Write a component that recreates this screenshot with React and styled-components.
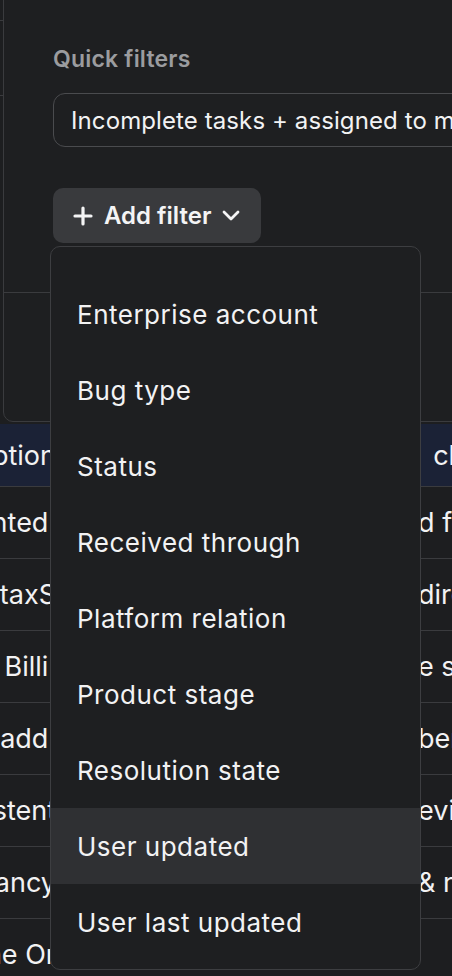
import React from 'react'
import styled, { createGlobalStyle } from 'styled-components'

const Global = createGlobalStyle`
  html, body {
    margin: 0;
    padding: 0;
    background: #1d1e20;
    overflow: hidden;
  }
  * { box-sizing: border-box; }
`;

const Page = styled.div`
  position: relative;
  width: 452px;
  height: 976px;
  overflow: hidden;
  background: #1d1e20;
  font-family: Inter, "Noto Sans", "Liberation Sans", sans-serif;
  color: #f2f2f3;
`;

const Backdrop = styled.div`
  display: flex;
  flex-direction: column;
`;

const Band = styled.div`
  height: ${p => p.h}px;
  border-bottom: ${p => (p.line ? '1px solid #3a3b3e' : 'none')};
`;

const Row = styled.div`
  display: flex;
  align-items: center;
  height: ${p => (p.head ? 63 : 72)}px;
  background: ${p => (p.head ? '#1b2236' : 'transparent')};
  border-bottom: 1px solid #3a3b3e;
  font-size: 27px;
  white-space: nowrap;
`;

const LeadCell = styled.div`
  flex: none;
  width: 56px;
  display: flex;
  justify-content: flex-end;
  overflow: hidden;
`;

const Middle = styled.div`
  flex: none;
  width: 362px;
`;

const TailCell = styled.div`
  flex: none;
  overflow: hidden;
`;

const Panel = styled.div`
  position: absolute;
  left: 3px;
  top: -12px;
  width: 520px;
  height: 434px;
  background: #1e1f21;
  border: 1px solid #3a3b3e;
  border-radius: 10px;
  padding-top: 56px;
  display: flex;
  flex-direction: column;
`;

const Section = styled.div`
  padding-left: 49px;
  display: flex;
  flex-direction: column;
  align-items: flex-start;
`;

const Title = styled.div`
  font-size: 23px;
  line-height: 28px;
  font-weight: 600;
  letter-spacing: 0.2px;
  color: #9b9c9f;
`;

const Preset = styled.div`
  margin-top: 20px;
  width: 440px;
  height: 54px;
  border: 1px solid #4a4b4e;
  border-radius: 12px;
  display: flex;
  align-items: center;
  padding-left: 17px;
  font-size: 24px;
  letter-spacing: 0.1px;
  white-space: nowrap;
  overflow: hidden;
`;

const AddButton = styled.button`
  margin-top: 41px;
  height: 55px;
  display: flex;
  align-items: center;
  gap: 11px;
  padding: 0 21px 0 20px;
  border: none;
  border-radius: 10px;
  background: #393a3d;
  color: #f4f4f5;
  font-family: inherit;
  font-size: 24px;
  font-weight: 600;
`;

const Divider = styled.div`
  margin-top: 49px;
  border-top: 1px solid #3a3b3e;
`;

const Menu = styled.div`
  position: absolute;
  left: 50px;
  top: 246px;
  width: 371px;
  height: 724px;
  background: #1e1f21;
  border: 1px solid #3d3e41;
  border-radius: 10px;
  padding-top: 29px;
  overflow: hidden;
  display: flex;
  flex-direction: column;
`;

const Item = styled.div`
  height: 76px;
  flex: none;
  display: flex;
  align-items: center;
  padding-left: 26px;
  font-size: 26px;
  letter-spacing: 0.5px;
  color: #f2f2f3;
  background: ${p => (p.active ? '#2f3033' : 'transparent')};
`;

const rows = [
  ['Description', '\u00a0\u00a0closed', true],
  ['Implemented\u00a0', 'd feedback'],
  ['SyntaxS', 'directory'],
  ['Billi\u00a0', 'e setup'],
  ['add\u00a0', 'bers'],
  ['Consistent', 'evice'],
  ['Vacancy', '& reports'],
  ['One Or', ''],
];

const items = [
  'Enterprise account',
  'Bug type',
  'Status',
  'Received through',
  'Platform relation',
  'Product stage',
  'Resolution state',
  'User updated',
  'User last updated',
];

const App = () => {
  return (
    <Page>
      <Global />
      <Backdrop>
        <Band h={21} line />
        <Band h={75} line />
        <Band h={328} />
        {rows.map(([lead, tail, head], i) => (
          <Row key={i} head={head}>
            <LeadCell><span>{lead}</span></LeadCell>
            <Middle />
            <TailCell>{tail}</TailCell>
          </Row>
        ))}
      </Backdrop>

      <Panel>
        <Section>
          <Title>Quick filters</Title>
          <Preset>Incomplete tasks + assigned to me</Preset>
          <AddButton>
            <svg width="20" height="20" viewBox="0 0 20 20" fill="none" stroke="currentColor" strokeWidth="3.2" strokeLinecap="round">
              <path d="M10 2v16M2 10h16" />
            </svg>
            Add filter
            <svg width="18" height="11" viewBox="0 0 18 11" fill="none" stroke="currentColor" strokeWidth="2.8" strokeLinecap="round" strokeLinejoin="round">
              <path d="M2 2l7 7 7-7" />
            </svg>
          </AddButton>
        </Section>
        <Divider />
      </Panel>

      <Menu>
        {items.map(label => (
          <Item key={label} active={label === 'User updated'}>{label}</Item>
        ))}
      </Menu>
    </Page>
  )
}

export default App
